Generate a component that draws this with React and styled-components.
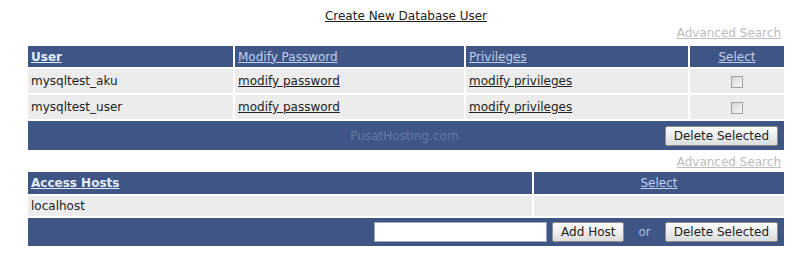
import React from 'react';
import styled, { createGlobalStyle } from 'styled-components';

const GlobalStyle = createGlobalStyle`
  body {
    margin: 0;
    background: #fff;
    font-family: "DejaVu Sans", Verdana, sans-serif;
    font-size: 12px;
    color: #222;
  }
`;

const Page = styled.div`
  width: 760px;
  padding: 9px 0 0 26px;
`;

const Title = styled.div`
  text-align: center;
  line-height: 14px;
  a {
    color: #222;
    text-decoration: underline;
  }
`;

const SearchLink = styled.a`
  display: block;
  text-align: right;
  color: #bcbcbc;
  text-decoration: underline;
  line-height: 15px;
  margin: ${(p) => p.$top}px 5px ${(p) => p.$bottom}px 0;
`;

const Table = styled.table`
  width: 100%;
  table-layout: fixed;
  border-collapse: separate;
  border-spacing: 2px;
`;

const Head = styled.th`
  background: #3e5586;
  height: ${(p) => p.$h || 21}px;
  padding: 0 3px;
  font-weight: ${(p) => (p.$bold ? 'bold' : 'normal')};
  text-align: ${(p) => (p.$center ? 'center' : 'left')};
  width: ${(p) => p.$w || 'auto'};
  a {
    color: ${(p) => (p.$bold ? '#e4ecf8' : '#bfd0ec')};
    text-decoration: underline;
  }
`;

const Cell = styled.td`
  background: #ececec;
  height: ${(p) => p.$h || 24}px;
  padding: 0 3px;
  text-align: ${(p) => (p.$center ? 'center' : 'left')};
  a {
    color: #222;
    text-decoration: underline;
  }
`;

const Footer = styled.td`
  background: #3e5586;
  height: ${(p) => p.$h || 29}px;
  padding: 0 6px 0 3px;
`;

const FooterGrid = styled.div`
  display: grid;
  grid-template-columns: 1fr auto 1fr;
  align-items: center;
`;

const Watermark = styled.span`
  color: #6379a3;
`;

const Actions = styled.div`
  display: flex;
  align-items: center;
  justify-content: flex-end;
  gap: 5px;
`;

const Button = styled.button`
  font-family: "DejaVu Sans", Verdana, sans-serif;
  font-size: 12px;
  color: #222;
  height: 20px;
  padding: 0 8px;
  border: 1px solid #8e8e8e;
  border-radius: 2px;
  background: linear-gradient(#fdfdfd, #dcdcdc);
`;

const HostInput = styled.input`
  width: 173px;
  height: 20px;
  box-sizing: border-box;
  border: 1px solid #9aa6bd;
  background: #fff;
`;

const Or = styled.span`
  color: #a8bce0;
  margin: 0 9px;
`;

const Check = styled.input.attrs({ type: 'checkbox' })`
  appearance: none;
  width: 12px;
  height: 12px;
  margin: 0;
  vertical-align: middle;
  border: 1px solid #a0a0a0;
  background: linear-gradient(135deg, #d6d6d6, #f8f8f8);
`;

const users = ['mysqltest_aku', 'mysqltest_user'];

export default function App() {
  return (
    <Page>
      <GlobalStyle />
      <Title>
        <a href="#">Create New Database User</a>
      </Title>
      <SearchLink href="#" $top={3} $bottom={3}>Advanced Search</SearchLink>
      <Table>
        <thead>
          <tr>
            <Head $bold $w="199px"><a href="#">User</a></Head>
            <Head $w="223px"><a href="#">Modify Password</a></Head>
            <Head $w="216px"><a href="#">Privileges</a></Head>
            <Head $center><a href="#">Select</a></Head>
          </tr>
        </thead>
        <tbody>
          {users.map((u) => (
            <tr key={u}>
              <Cell>{u}</Cell>
              <Cell><a href="#">modify password</a></Cell>
              <Cell><a href="#">modify privileges</a></Cell>
              <Cell $center><Check /></Cell>
            </tr>
          ))}
          <tr>
            <Footer colSpan={4}>
              <FooterGrid>
                <span />
                <Watermark>PusatHosting.com</Watermark>
                <Actions>
                  <Button>Delete Selected</Button>
                </Actions>
              </FooterGrid>
            </Footer>
          </tr>
        </tbody>
      </Table>
      <SearchLink href="#" $top={3} $bottom={0}>Advanced Search</SearchLink>
      <Table>
        <thead>
          <tr>
            <Head $bold $h={22} $w="498px"><a href="#">Access Hosts</a></Head>
            <Head $center $h={22}><a href="#">Select</a></Head>
          </tr>
        </thead>
        <tbody>
          <tr>
            <Cell $h={20}>localhost</Cell>
            <Cell $h={20} />
          </tr>
          <tr>
            <Footer colSpan={2} $h={28}>
              <Actions>
                <HostInput />
                <Button>Add Host</Button>
                <Or>or</Or>
                <Button>Delete Selected</Button>
              </Actions>
            </Footer>
          </tr>
        </tbody>
      </Table>
    </Page>
  );
}
